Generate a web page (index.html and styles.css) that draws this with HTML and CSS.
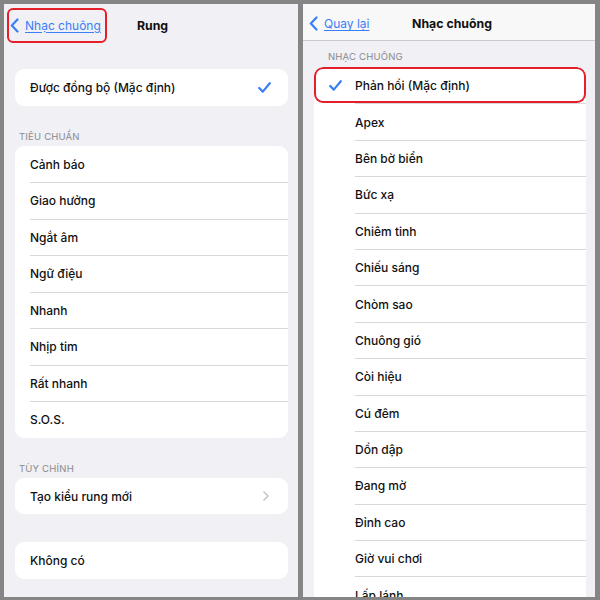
FILE: index.html
```html
<!DOCTYPE html>
<html>
<head>
    <title>Rung / Nhạc chuông</title>
    <link rel="stylesheet" href="styles.css">
</head>
<body>
    <div class="frame">
        <!-- Màn hình Rung -->
        <div class="panel panel-left">
            <div class="nav nav-plain">
                <a class="back marked" href="#">
                    <svg class="chev-back" viewBox="0 0 9 15"><path d="M7.5 1.5 L1.8 7.5 L7.5 13.5"/></svg>
                    <span>Nhạc chuông</span>
                </a>
                <div class="nav-title">Rung</div>
                <div></div>
            </div>

            <div class="group first-group">
                <div class="row">
                    <span>Được đồng bộ (Mặc định)</span>
                    <svg class="check check-right" viewBox="0 0 13 11"><path d="M1.2 6 L4.8 9.6 L11.8 1.2"/></svg>
                </div>
            </div>

            <p class="section-label">Tiêu chuẩn</p>
            <div class="group">
                <div class="row">Cảnh báo</div>
                <div class="row">Giao hưởng</div>
                <div class="row">Ngắt âm</div>
                <div class="row">Ngữ điệu</div>
                <div class="row">Nhanh</div>
                <div class="row">Nhịp tim</div>
                <div class="row">Rất nhanh</div>
                <div class="row">S.O.S.</div>
            </div>

            <p class="section-label">Tùy chỉnh</p>
            <div class="group">
                <div class="row">
                    <span>Tạo kiểu rung mới</span>
                    <svg class="disclosure" viewBox="0 0 6 10"><path d="M1 1 L5 5 L1 9"/></svg>
                </div>
            </div>

            <div class="group last-group">
                <div class="row">Không có</div>
            </div>
        </div>

        <!-- Màn hình Nhạc chuông -->
        <div class="panel panel-right">
            <div class="nav nav-bar">
                <a class="back" href="#">
                    <svg class="chev-back" viewBox="0 0 9 15"><path d="M7.5 1.5 L1.8 7.5 L7.5 13.5"/></svg>
                    <span>Quay lại</span>
                </a>
                <div class="nav-title">Nhạc chuông</div>
                <div></div>
            </div>

            <p class="section-label label-right">Nhạc chuông</p>
            <div class="group tones">
                <div class="row tone selected">
                    <span class="tick"><svg class="check" viewBox="0 0 13 11"><path d="M1.2 6 L4.8 9.6 L11.8 1.2"/></svg></span>
                    <span class="tone-name">Phản hồi (Mặc định)</span>
                </div>
                <div class="row tone"><span class="tick"></span><span class="tone-name">Apex</span></div>
                <div class="row tone"><span class="tick"></span><span class="tone-name">Bên bờ biển</span></div>
                <div class="row tone"><span class="tick"></span><span class="tone-name">Bức xạ</span></div>
                <div class="row tone"><span class="tick"></span><span class="tone-name">Chiêm tinh</span></div>
                <div class="row tone"><span class="tick"></span><span class="tone-name">Chiếu sáng</span></div>
                <div class="row tone"><span class="tick"></span><span class="tone-name">Chòm sao</span></div>
                <div class="row tone"><span class="tick"></span><span class="tone-name">Chuông gió</span></div>
                <div class="row tone"><span class="tick"></span><span class="tone-name">Còi hiệu</span></div>
                <div class="row tone"><span class="tick"></span><span class="tone-name">Cú đêm</span></div>
                <div class="row tone"><span class="tick"></span><span class="tone-name">Dồn dập</span></div>
                <div class="row tone"><span class="tick"></span><span class="tone-name">Đang mờ</span></div>
                <div class="row tone"><span class="tick"></span><span class="tone-name">Đỉnh cao</span></div>
                <div class="row tone"><span class="tick"></span><span class="tone-name">Giờ vui chơi</span></div>
                <div class="row tone"><span class="tick"></span><span class="tone-name">Lấp lánh</span></div>
            </div>
        </div>
    </div>
</body>
</html>
```

FILE: styles.css
```css
* { box-sizing: border-box; }
body { margin: 0; background: #858585; font-family: Inter, "Noto Sans", sans-serif; color: #111; }
.frame { display: flex; gap: 5px; padding: 4px 5px 3px 4px; height: 600px; }
.panel { height: 593px; overflow: hidden; background: #f0f0f5; }
.panel-left { width: 294px; }
.panel-right { width: 292px; }

.nav { display: grid; grid-template-columns: 1fr auto 1fr; align-items: center; }
.nav-plain { height: 42px; padding-left: 3px; }
.nav-bar { height: 37px; background: #f8f8f9; border-bottom: 1px solid #c9c9ce; padding: 3px 0 0 6px; }
.nav-title { font-size: 12.3px; font-weight: 700; }
.back { display: flex; align-items: center; gap: 6px; color: #3a7ff6; font-size: 12px; text-decoration: underline; text-underline-offset: 2px; justify-self: start; }
.marked { border: 2px solid #e3202a; border-radius: 6px; height: 35px; padding: 0 4px 0 1px; }
.chev-back { width: 9px; height: 15px; fill: none; stroke: #3a7ff6; stroke-width: 2.2; stroke-linecap: round; stroke-linejoin: round; }

.group { background: #fff; border-radius: 9px; margin: 0 10px 0 11px; overflow: hidden; }
.first-group { margin-top: 23px; }
.last-group { margin-top: 28px; }
.row { height: 36.5px; display: flex; align-items: center; justify-content: space-between; padding: 1px 15px 0; font-size: 12px; font-weight: 500; position: relative; }
.row + .row::before { content: ""; position: absolute; top: 0; left: 15px; right: 0; border-top: 1px solid #d8d8dc; }

.section-label { margin: 0; padding: 25px 15px 4px; font-size: 9.5px; line-height: 11px; text-transform: uppercase; color: #8a8a8e; letter-spacing: 0.2px; }
.label-right { padding: 10px 0 5px 25px; }

.check { width: 13px; height: 11px; fill: none; stroke: #3a7ff6; stroke-width: 2.2; stroke-linecap: round; stroke-linejoin: round; }
.check-right { margin-right: 2px; }
.disclosure { width: 6px; height: 10px; fill: none; stroke: #c4c4c8; stroke-width: 1.6; stroke-linecap: round; stroke-linejoin: round; margin-right: 4px; }

.tones { margin: 0 9px 0 11px; }
.tone { height: 36.4px; padding: 1px 0 0; justify-content: flex-start; }
.tone + .tone::before { left: 41px; }
.tick { width: 41px; display: flex; justify-content: center; padding-left: 2px; }
.selected { border-radius: 9px; box-shadow: inset 0 0 0 2px #e3202a; }
```
